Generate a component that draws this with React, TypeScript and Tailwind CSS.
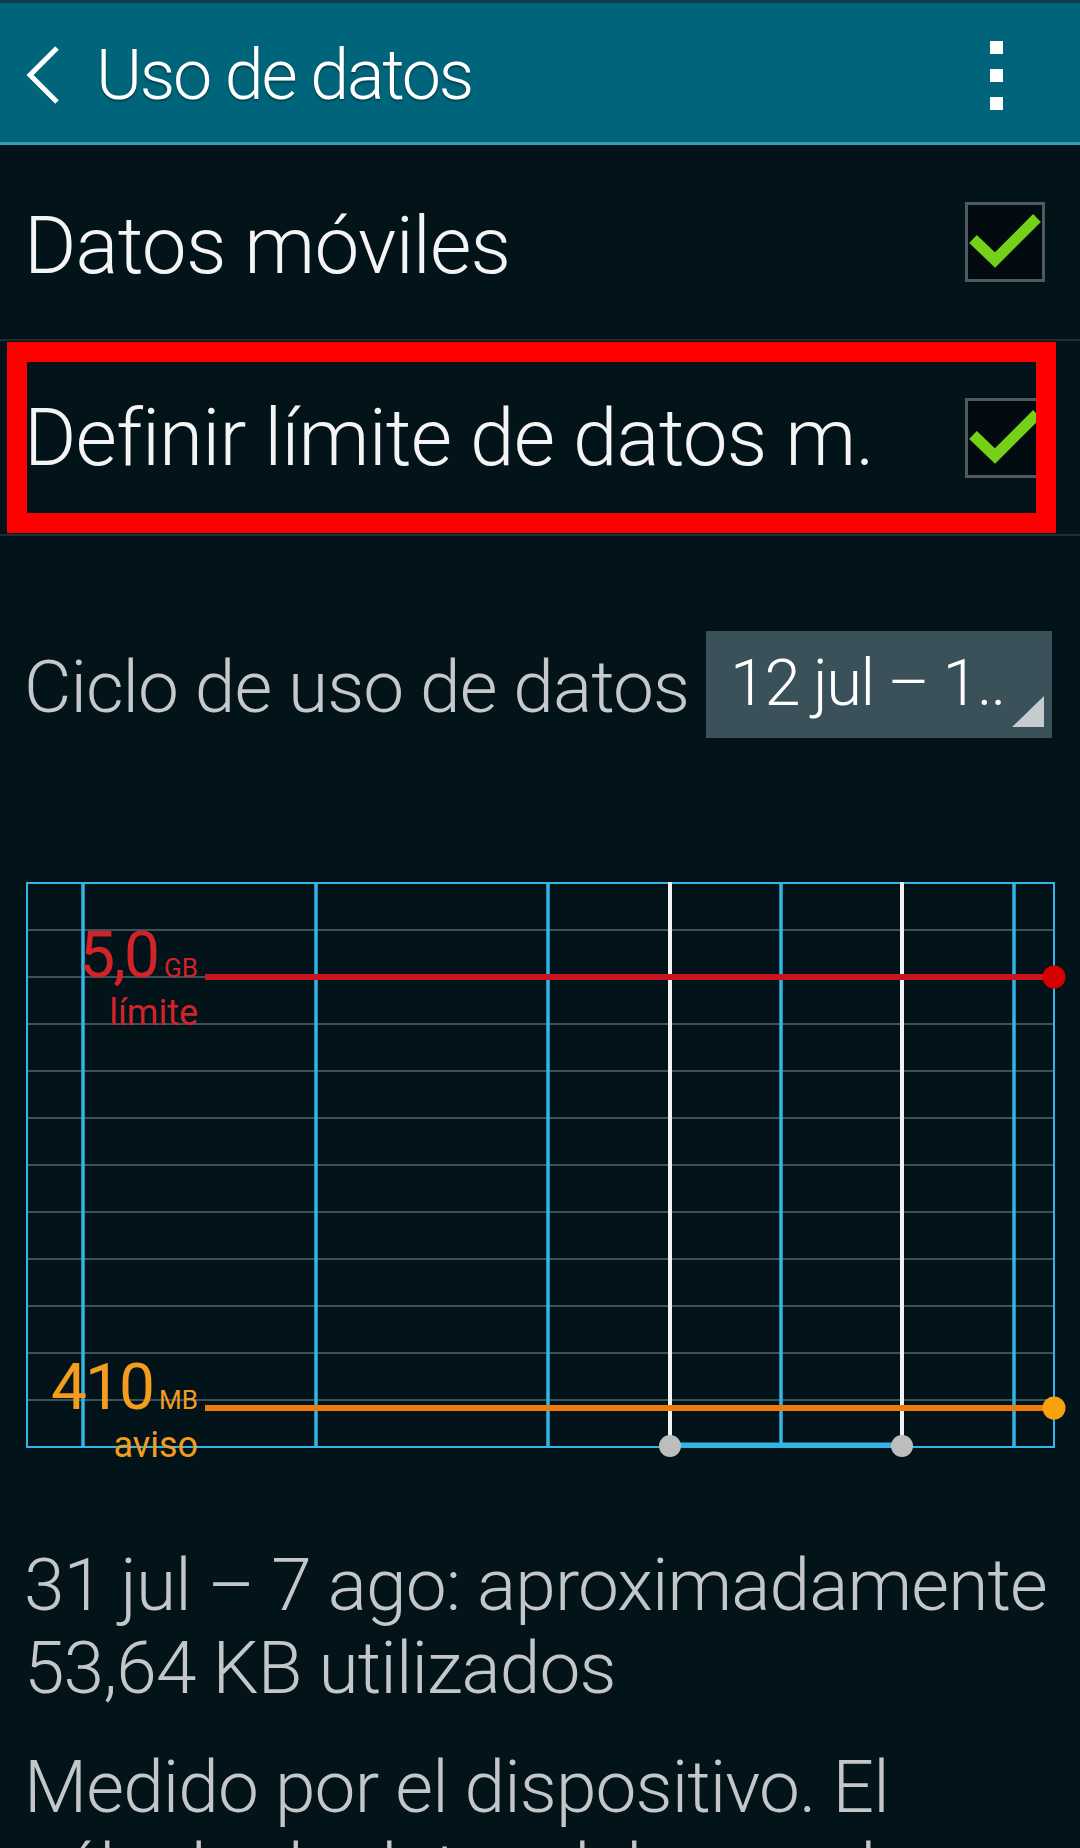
import React from "react";

function CheckBox() {
  return (
    <div className="w-[80px] h-[80px] border-[3px] border-[#4e5a5f] bg-[#020b0f] shrink-0 relative">
      <svg
        className="absolute -left-[3px] -top-[3px]"
        width="80"
        height="80"
        viewBox="0 0 80 80"
      >
        <polyline
          points="8,37 30,58 72,16"
          fill="none"
          stroke="#74d117"
          strokeWidth="11"
          strokeLinecap="butt"
          strokeLinejoin="miter"
        />
      </svg>
    </div>
  );
}

function Chart() {
  const hLines = Array.from({ length: 11 }, (_, i) => 13 + 47 * (i + 1));
  const blue = [83, 316, 548, 781, 1014];
  const white = [670, 902];

  return (
    <div className="relative h-[600px] mt-[132px]">
      <svg className="absolute inset-0" width="1080" height="600" viewBox="0 0 1080 600">
        {hLines.map((y) => (
          <line key={y} x1="27" x2="1053" y1={y} y2={y} stroke="#3c5259" strokeWidth="2" />
        ))}
        <rect x="27" y="13" width="1027" height="564" fill="none" stroke="#33b5e5" strokeWidth="2" />
        {blue.map((x) => (
          <line key={x} x1={x} x2={x} y1="13" y2="577" stroke="#33b5e5" strokeWidth="3.5" />
        ))}
        <line x1="670" x2="902" y1="575" y2="575" stroke="#33b5e5" strokeWidth="5" />
        {white.map((x) => (
          <line key={x} x1={x} x2={x} y1="12" y2="576" stroke="#f2f2f2" strokeWidth="4" />
        ))}
        {white.map((x) => (
          <circle key={x} cx={x} cy="576" r="11" fill="#bdbdbd" />
        ))}
        <line x1="205" x2="1054" y1="107" y2="107" stroke="#c9161e" strokeWidth="6" />
        <circle cx="1054" cy="107" r="11.5" fill="#d50000" />
        <line x1="205" x2="1054" y1="538" y2="538" stroke="#f07a10" strokeWidth="6" />
        <circle cx="1054" cy="538" r="11.5" fill="#f7a20c" />
      </svg>

      <div className="absolute left-0 top-[54px] w-[198px] text-[#d2232a] leading-none">
        <div className="flex justify-end items-baseline">
          <span className="text-[64px] tracking-[-0.03em]">5,0</span>
          <span className="text-[26px] ml-[6px]">GB</span>
        </div>
        <div className="text-right text-[36px] mt-[7px]">límite</div>
      </div>

      <div className="absolute left-0 top-[486px] w-[198px] text-[#f39c1e] leading-none">
        <div className="flex justify-end items-baseline">
          <span className="text-[64px] tracking-[-0.03em]">410</span>
          <span className="text-[26px] ml-[6px]">MB</span>
        </div>
        <div className="text-right text-[36px] mt-[7px]">aviso</div>
      </div>
    </div>
  );
}

export default function App() {
  return (
    <div className="w-[1080px] h-[1848px] overflow-hidden bg-[#03131a] [font-family:Roboto,'Noto_Sans',sans-serif]">
      <div className="h-[3px] bg-[#0a3f4d]" />
      <header className="h-[142px] bg-[#00657a] border-b-[3px] border-[#3a9cb4] flex items-center pt-[5px] pl-[26px] pr-[77px]">
        <svg width="34" height="58" viewBox="0 0 34 58" className="shrink-0">
          <polyline points="31,2 4,29 31,56" fill="none" stroke="#ffffff" strokeWidth="5" />
        </svg>
        <h1 className="ml-[36px] text-[70px] font-light leading-none text-white tracking-[-0.032em] [text-shadow:0_2px_2px_rgba(0,0,0,0.35)]">
          Uso de datos
        </h1>
        <div className="ml-auto flex flex-col gap-[15px]">
          <span className="block w-[13px] h-[13px] bg-white" />
          <span className="block w-[13px] h-[13px] bg-white" />
          <span className="block w-[13px] h-[13px] bg-white" />
        </div>
      </header>

      <div className="h-[194px] flex items-center justify-between pl-[24px] pr-[35px]">
        <span className="text-[80px] font-light leading-none text-[#f4f4f4] tracking-[-0.01em] mt-[8px]">
          Datos móviles
        </span>
        <CheckBox />
      </div>
      <div className="h-[2px] bg-[#1f2d33]" />

      <div className="relative h-[193px] flex items-center justify-between pl-[24px] pr-[35px]">
        <span className="text-[80px] font-light leading-none text-[#f4f4f4] tracking-[-0.01em]">
          Definir límite de datos m.
        </span>
        <CheckBox />
        <div className="absolute left-[7px] top-[1px] w-[1049px] h-[191px] border-[20px] border-[#ff0000]" />
      </div>
      <div className="h-[2px] bg-[#1f2d33]" />

      <div className="mt-[95px] h-[107px] flex items-center pl-[24px]">
        <span className="text-[73px] font-light leading-none text-[#c5c9cb] tracking-[-0.013em] mt-[6px]">
          Ciclo de uso de datos
        </span>
        <div className="relative ml-auto mr-[28px] w-[346px] h-[107px] bg-[#3a5159] flex items-center pl-[24px]">
          <span className="text-[65px] font-light leading-none text-white tracking-[-0.025em] mt-[-2px]">
            12 jul – 1..
          </span>
          <svg className="absolute right-[8px] bottom-[11px]" width="32" height="31" viewBox="0 0 32 31">
            <polygon points="0,31 32,31 32,0" fill="#c5ccd0" />
          </svg>
        </div>
      </div>

      <Chart />

      <div className="mt-[74px] pl-[24px] pr-[16px] text-[73px] font-light leading-[83px] text-[#c3c7c9] tracking-[-0.012em]">
        <p>31 jul – 7 ago: aproximadamente 53,64 KB utilizados</p>
        <p className="mt-[36px]">
          Medido por el dispositivo. El cálculo de datos del operador puede ser diferente.
        </p>
      </div>
    </div>
  );
}
